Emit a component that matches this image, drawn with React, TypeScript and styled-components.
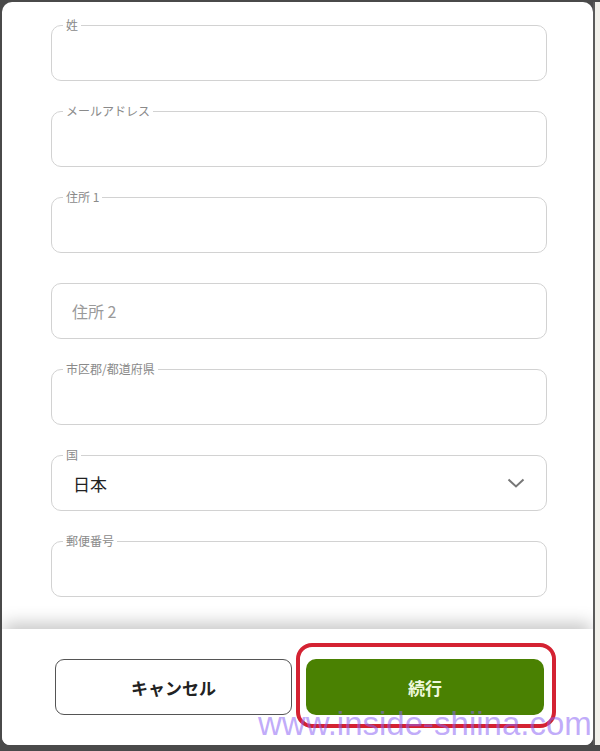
import styled, { createGlobalStyle } from "styled-components"

interface FieldData {
  label: string,
  floating: boolean,
  value?: string,
  select?: boolean
}

const fields: FieldData[] = [
  { label: '姓', floating: true },
  { label: 'メールアドレス', floating: true },
  { label: '住所 1', floating: true },
  { label: '住所 2', floating: false },
  { label: '市区郡/都道府県', floating: true },
  { label: '国', floating: true, value: '日本', select: true },
  { label: '郵便番号', floating: true },
]

export default function App() {
  return (
    <>
      <GlobalStyle />
      <Frame>
        <Modal>
          <FormArea>
            {fields.map(field => (
              <Field key={field.label}>
                {field.floating && <FloatLabel>{field.label}</FloatLabel>}
                {field.select ? (
                  <SelectRow>
                    <SelectValue>{field.value}</SelectValue>
                    <svg width="18" height="10" viewBox="0 0 18 10">
                      <polyline points="1.5,1.5 9,8.5 16.5,1.5" fill="none" stroke="#777" strokeWidth="2" />
                    </svg>
                  </SelectRow>
                ) : (
                  <Input placeholder={field.floating ? '' : field.label} />
                )}
              </Field>
            ))}
          </FormArea>
          <Footer>
            <Button>キャンセル</Button>
            <Button primary>続行</Button>
            <Highlight />
          </Footer>
        </Modal>
        <RightEdge />
        <Watermark>www.inside-shiina.com</Watermark>
      </Frame>
    </>
  )
}

const GlobalStyle = createGlobalStyle`
  body {
    margin: 0;
    background: #4a4a4a;
    font-family: "Noto Sans CJK JP", "Noto Sans", sans-serif;
  }
`
const Frame = styled.div`
  position: relative;
  display: flex;
  width: 600px;
  height: 751px;
  padding: 2px 0 6px 2px;
  box-sizing: border-box;
  background: #4a4a4a;
  overflow: hidden;
`
const Modal = styled.div`
  display: flex;
  flex-direction: column;
  width: 591px;
  flex: none;
  background: #fff;
  border-radius: 10px 10px 8px 8px;
  overflow: hidden;
`
const RightEdge = styled.div`
  flex: 1;
  border-left: 2px solid #5a5a5a;
  background: #f1f0ea;
`
const FormArea = styled.div`
  flex: 1;
  display: flex;
  flex-direction: column;
  gap: 30px;
  padding: 23px 0 0 49px;
  overflow: hidden;
`
const Field = styled.div`
  position: relative;
  flex: none;
  width: 496px;
  height: 56px;
  box-sizing: border-box;
  border: 1px solid #d2d2d2;
  border-radius: 10px;
`
const FloatLabel = styled.span`
  position: absolute;
  top: -8px;
  left: 11px;
  padding: 0 3px;
  background: #fff;
  font-size: 12px;
  line-height: 14px;
  color: #8a8a8a;
`
const Input = styled.input`
  width: 100%;
  height: 100%;
  box-sizing: border-box;
  border: none;
  background: transparent;
  outline: none;
  padding: 0 20px;
  font-family: "Noto Sans CJK JP", "Noto Sans", sans-serif;
  font-size: 16px;
  color: #222;

  &::placeholder {
    color: #9a9a9a;
  }
`
const SelectRow = styled.div`
  display: flex;
  align-items: center;
  justify-content: space-between;
  height: 100%;
  padding: 0 21px 0 21px;
`
const SelectValue = styled.span`
  font-size: 17px;
  color: #222;
`
const Footer = styled.div`
  position: relative;
  display: flex;
  gap: 14px;
  height: 116px;
  flex: none;
  box-sizing: border-box;
  padding: 30px 0 0 53px;
  background: #fff;
  box-shadow: 0 -8px 16px -2px rgba(0, 0, 0, 0.22);
`
const Button = styled.button<{ primary?: boolean }>`
  width: ${props => props.primary ? '238px' : '237px'};
  height: 56px;
  box-sizing: border-box;
  border: ${props => props.primary ? 'none' : '1px solid #555'};
  border-radius: ${props => props.primary ? '10px' : '9px'};
  background: ${props => props.primary ? '#4a8102' : '#fff'};
  color: ${props => props.primary ? '#eef8dc' : '#222'};
  font-family: "Noto Sans CJK JP", "Noto Sans", sans-serif;
  font-size: 17px;
  font-weight: 700;
  cursor: pointer;
`
const Highlight = styled.div`
  position: absolute;
  left: 294px;
  top: 14px;
  width: 260px;
  height: 85px;
  box-sizing: border-box;
  border: 4px solid #d42232;
  border-radius: 16px;
  pointer-events: none;
`
const Watermark = styled.div`
  position: absolute;
  left: 258px;
  top: 707px;
  font-family: "Liberation Sans", Arial, sans-serif;
  font-size: 33px;
  line-height: 1;
  color: rgba(140, 100, 245, 0.55);
  white-space: nowrap;
  pointer-events: none;
`
